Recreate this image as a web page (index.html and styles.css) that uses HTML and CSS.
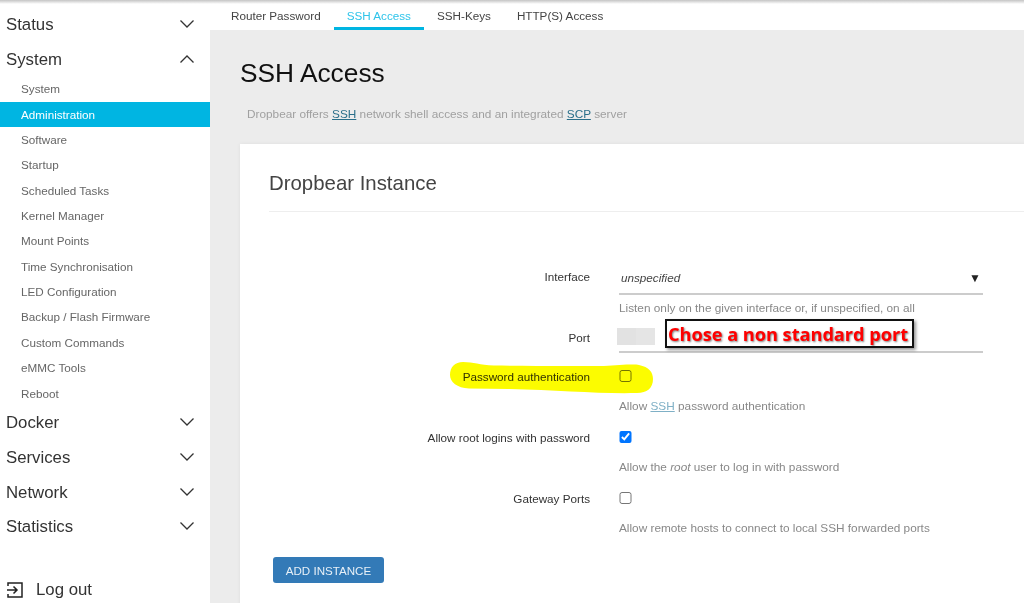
FILE: index.html
```html
<!DOCTYPE html>
<html lang="en">
<head>
    <meta charset="UTF-8">
    <title>SSH Access</title>
    <link rel="stylesheet" href="styles.css">
</head>
<body>
    <div class="top-shadow"></div>
    <div class="layout">
        <aside class="sidebar">
            <nav class="menu">
                <a class="menu-head"><span>Status</span><svg class="chev" viewBox="0 0 16 10"><path d="M1.500 1.500 8 8l6.500-6.500"/></svg></a>
                <a class="menu-head"><span>System</span><svg class="chev" viewBox="0 0 16 10"><path d="M1.500 8.500 8 2l6.500 6.500"/></svg></a>
                <ul class="submenu">
                    <li><a>System</a></li>
                    <li><a class="active">Administration</a></li>
                    <li><a>Software</a></li>
                    <li><a>Startup</a></li>
                    <li><a>Scheduled Tasks</a></li>
                    <li><a>Kernel Manager</a></li>
                    <li><a>Mount Points</a></li>
                    <li><a>Time Synchronisation</a></li>
                    <li><a>LED Configuration</a></li>
                    <li><a>Backup / Flash Firmware</a></li>
                    <li><a>Custom Commands</a></li>
                    <li><a>eMMC Tools</a></li>
                    <li><a>Reboot</a></li>
                </ul>
                <a class="menu-head"><span>Docker</span><svg class="chev" viewBox="0 0 16 10"><path d="M1.500 1.500 8 8l6.500-6.500"/></svg></a>
                <a class="menu-head"><span>Services</span><svg class="chev" viewBox="0 0 16 10"><path d="M1.500 1.500 8 8l6.500-6.500"/></svg></a>
                <a class="menu-head"><span>Network</span><svg class="chev" viewBox="0 0 16 10"><path d="M1.500 1.500 8 8l6.500-6.500"/></svg></a>
                <a class="menu-head"><span>Statistics</span><svg class="chev" viewBox="0 0 16 10"><path d="M1.500 1.500 8 8l6.500-6.500"/></svg></a>
            </nav>
            <a class="logout">
                <svg class="logout-icon" viewBox="0 0 18 18"><path d="M2 5V2h14v14H2v-3M1 9h10M7.500 5.500 11 9l-3.500 3.500"/></svg>
                <span>Log out</span>
            </a>
        </aside>

        <main class="content">
            <ul class="tabs">
                <li><a>Router Password</a></li>
                <li><a class="active">SSH Access</a></li>
                <li><a>SSH-Keys</a></li>
                <li><a>HTTP(S) Access</a></li>
            </ul>

            <h1>SSH Access</h1>
            <p class="intro">Dropbear offers <u>SSH</u> network shell access and an integrated <u>SCP</u> server</p>

            <section class="card">
                <h2>Dropbear Instance</h2>

                <div class="form">
                    <div class="row row-select">
                        <label>Interface</label>
                        <div class="field select"><em>unspecified</em><span class="arrow">▼</span></div>
                    </div>
                    <p class="hint hint-iface">Listen only on the given interface or, if unspecified, on all</p>

                    <div class="row row-port">
                        <label>Port</label>
                        <div class="field port"><span class="redacted"></span></div>
                    </div>

                    <div class="row row-check">
                        <label>Password authentication</label>
                        <input class="check" type="checkbox">
                    </div>
                    <p class="hint">Allow <u class="soft">SSH</u> password authentication</p>

                    <div class="row row-check">
                        <label>Allow root logins with password</label>
                        <input class="check" type="checkbox" checked>
                    </div>
                    <p class="hint">Allow the <em>root</em> user to log in with password</p>

                    <div class="row row-check">
                        <label>Gateway Ports</label>
                        <input class="check" type="checkbox">
                    </div>
                    <p class="hint">Allow remote hosts to connect to local SSH forwarded ports</p>
                </div>

                <button class="add-btn">ADD INSTANCE</button>
            </section>
        </main>
    </div>

    <!-- markup added on top of the screenshot -->
    <svg class="marker" viewBox="0 0 204 32"><path d="M14 0C25 0 30 3 45 3.500 90 4 130 4 155 4 170 3 185 2 190 3 200 5 204 10 204 17 204 26 198 31 188 31 150 32 110 28 60 27L20 26.500C8 26 1 20 1 13 1 5 6 0 14 0z"/></svg>
    <div class="callout">Chose a non standard port</div>
</body>
</html>
```

FILE: styles.css
```css
/* General Reset */
* {
    margin: 0;
    padding: 0;
    box-sizing: border-box;
}

html, body {
    height: 100%;
    overflow: hidden;
}

body {
    font-family: 'Liberation Sans', Arial, sans-serif;
    background-color: #fff;
    color: #333;
    position: relative;
}

.top-shadow {
    position: absolute;
    top: 0;
    left: 0;
    right: 0;
    height: 4px;
    background: linear-gradient(#c4c4c4, rgba(255, 255, 255, 0));
    z-index: 5;
}

.layout {
    display: flex;
    height: 603px;
}

/* Sidebar */
.sidebar {
    width: 210px;
    flex-shrink: 0;
    padding-top: 7px;
    display: flex;
    flex-direction: column;
}

.menu-head {
    display: flex;
    align-items: center;
    justify-content: space-between;
    height: 34.700px;
    padding: 0 15px 0 6px;
    font-size: 16.800px;
    color: #333;
}

.menu-head span {
    padding-top: 2px;
}

.chev {
    width: 16px;
    height: 10px;
    fill: none;
    stroke: #333;
    stroke-width: 1.300;
}

ul {
    list-style-type: none;
}

.submenu {
    margin-bottom: -1px;
}

.submenu a {
    display: block;
    height: 25.350px;
    line-height: 25.350px;
    padding-left: 21px;
    font-size: 11.700px;
    color: #666;
}

.submenu a.active {
    background-color: #00b5e2;
    color: #fff;
}

.logout {
    display: flex;
    align-items: center;
    gap: 12px;
    margin-top: auto;
    height: 26px;
    padding-left: 6px;
    font-size: 16.800px;
    color: #333;
}

.logout-icon {
    width: 18px;
    height: 18px;
    fill: none;
    stroke: #222;
    stroke-width: 1.500;
}

/* Main area */
.content {
    flex: 1;
    min-width: 0;
    background-color: #ececec;
    overflow: hidden;
}

.tabs {
    display: flex;
    height: 30px;
    background-color: #fff;
    padding-left: 8px;
}

.tabs a {
    display: block;
    height: 30px;
    line-height: 31px;
    padding: 0 13px;
    font-size: 11.700px;
    color: #444;
}

.tabs a.active {
    color: #2fc4ea;
    border-bottom: 3px solid #00b5e2;
}

h1 {
    font-size: 26.300px;
    font-weight: 400;
    color: #111;
    margin: 27px 0 0 30px;
    line-height: 32px;
}

.intro {
    margin: 16px 0 0 37px;
    font-size: 11.800px;
    line-height: 18px;
    color: #a0a0a0;
}

.intro u {
    color: #2a6f8a;
}

/* Card */
.card {
    margin: 21px 0 0 30px;
    width: 830px;
    height: 480px;
    background-color: #fff;
    box-shadow: 0 0 4px rgba(0, 0, 0, 0.06);
    padding-top: 26px;
}

h2 {
    font-size: 20.400px;
    font-weight: 400;
    color: #444;
    margin-left: 29px;
    line-height: 26px;
    padding-bottom: 15px;
    border-bottom: 1px solid #eee;
}

.form {
    padding-top: 50px;
}

.row {
    display: grid;
    grid-template-columns: 350px 364px;
    column-gap: 29px;
    align-items: center;
}

.row label {
    text-align: right;
    font-size: 11.700px;
    color: #333;
}

.row-select {
    height: 33px;
}

.row-select label {
    margin-bottom: 5px;
}

.field {
    height: 33px;
    border-bottom: 2px solid #ccc;
    font-size: 11.700px;
}

.select {
    display: flex;
    align-items: center;
    justify-content: space-between;
    padding: 0 2px 0 2px;
    color: #444;
}

.arrow {
    font-size: 12px;
    color: #222;
}

.hint {
    margin-left: 379px;
    font-size: 11.800px;
    line-height: 18px;
    color: #888;
}

.hint-iface {
    margin-top: 4px;
}

.hint u.soft {
    color: #7fb0c6;
}

.row-port {
    height: 33px;
    margin-top: 3px;
}

.row-port label {
    margin-top: 2px;
}

.port {
    padding-top: 8px;
}

.redacted {
    display: block;
    width: 38px;
    height: 17px;
    margin-left: -2px;
    background: linear-gradient(90deg, #e2e2e2 50%, #e5e5e5 50%);
}

.row-check {
    height: 30px;
    margin-top: 7px;
}

.row-port + .row-check {
    margin-top: 8px;
}

.row-check + .hint {
    margin-top: 6px;
}

.check {
    width: 12.500px;
    height: 12.500px;
}

.add-btn {
    margin: 20px 0 0 33px;
    width: 111px;
    height: 26px;
    background-color: #337ab7;
    color: #e8f0f7;
    border: none;
    border-radius: 3px;
    font-family: inherit;
    font-size: 11.600px;
}

/* Annotations over the screenshot */
.marker {
    position: absolute;
    left: 449px;
    top: 362px;
    width: 204px;
    height: 32px;
    fill: #fcfc00;
    mix-blend-mode: multiply;
}

.callout {
    position: absolute;
    left: 665px;
    top: 319px;
    width: 249px;
    height: 29px;
    background-color: #fff;
    border: 2px solid #111;
    box-shadow: 2px 2px 3px rgba(0, 0, 0, 0.4);
    font-family: 'Open Sans', sans-serif;
    font-weight: 700;
    font-size: 18.150px;
    line-height: 26px;
    white-space: nowrap;
    padding-left: 1px;
    color: #f00;
    text-shadow: 1px 1px 2px rgba(0, 0, 0, 0.5);
}
```
